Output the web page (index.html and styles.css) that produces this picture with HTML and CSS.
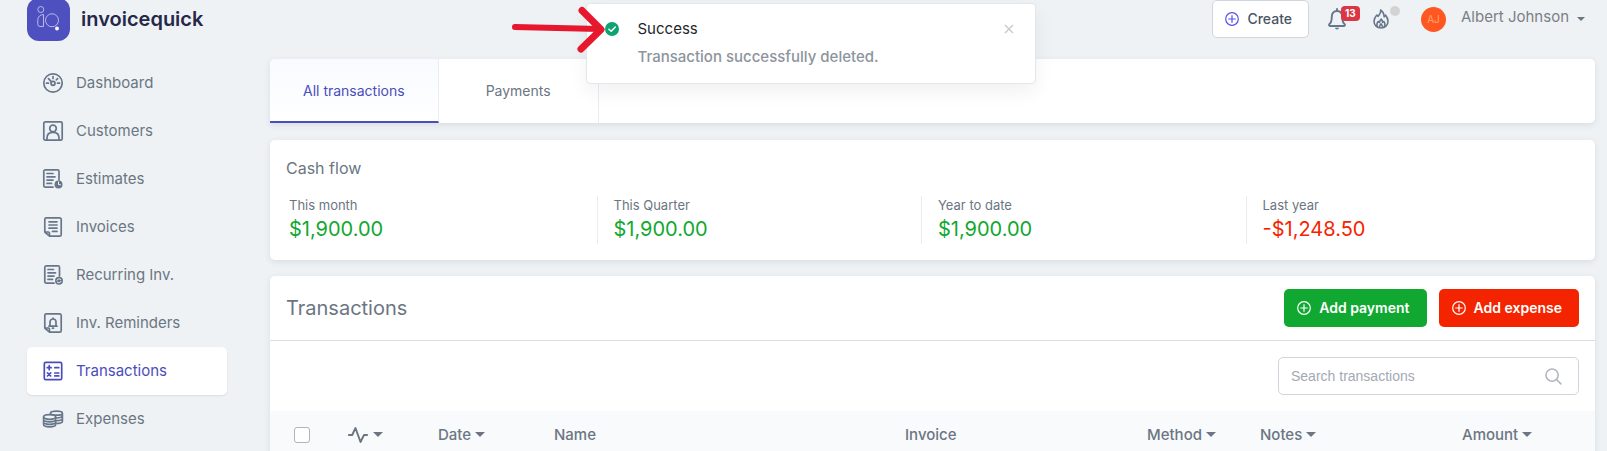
FILE: index.html
```html
<!DOCTYPE html>
<html lang="en">
<head>
<meta charset="utf-8">
<meta name="viewport" content="width=device-width, initial-scale=1">
<title>Transactions – invoicequick</title>
<link rel="stylesheet" href="styles.css">
</head>
<body>
<div class="app">
  <aside class="sidebar">
    <a class="brand" href="#">
      <svg class="brand-mark" viewBox="0 0 43 43" aria-hidden="true">
        <rect width="43" height="43" rx="12" fill="#4f50bf"/>
        <g fill="none" stroke="#b9b9ea" stroke-width="1">
          <circle cx="13.800" cy="11.500" r="3"/>
          <path d="M16.500 16.500v12h-3.500a2.200 2.200 0 0 1-2.200-2.200v-4.500c0-3 2.500-5.300 5.700-5.300z"/>
          <circle cx="25" cy="22.300" r="6.500"/>
        </g>
        <circle cx="30" cy="30.500" r="1.900" fill="#fff"/>
      </svg>
      <span class="brand-name">invoicequick</span>
    </a>
    <nav class="nav">
      <a class="nav-item" href="#">
        <svg class="nav-icon" viewBox="0 0 20 20" aria-hidden="true"><circle cx="10" cy="10" r="9.200"/><circle cx="10" cy="10.300" r="2"/><path d="M8.500 8.900 5.500 5.600M10 3.500v2M14.600 5.600l-1.300 1.300M3.500 10.200h2M14.500 10.200h2"/></svg>
        Dashboard</a>
      <a class="nav-item" href="#">
        <svg class="nav-icon" viewBox="0 0 20 20" aria-hidden="true"><rect x=".8" y=".8" width="18.400" height="18.400" rx="1.500"/><circle cx="10" cy="7.500" r="3.300"/><path d="M4 19v-2c0-3.400 2.400-5.600 6-5.600s6 2.200 6 5.600v2"/></svg>
        Customers</a>
      <a class="nav-item" href="#">
        <svg class="nav-icon" viewBox="0 0 20 20" aria-hidden="true"><path d="M16 11V2.300A1.500 1.500 0 0 0 14.500.8H2.300A1.500 1.500 0 0 0 .8 2.300v14.400a1.500 1.500 0 0 0 1.500 1.500H10M4 4.500h6M4 7.800h8M4 11.100h6M4 14.400h4.500"/><circle class="solid" cx="15.500" cy="15.500" r="4"/><path class="cut" d="M15.500 13v2.700h2"/></svg>
        Estimates</a>
      <a class="nav-item" href="#">
        <svg class="nav-icon" viewBox="0 0 20 20" aria-hidden="true"><path d="M3.300.8h13.400A1.500 1.500 0 0 1 18.200 2.300v15.400a1.500 1.500 0 0 1-1.500 1.500H6.500L1.800 15V2.300A1.500 1.500 0 0 1 3.300.8zM2 15h3.200a1.300 1.300 0 0 1 1.300 1.300V19M6 4.800h8M6 8h8M6 11.200h8M9.500 14.400H14"/></svg>
        Invoices</a>
      <a class="nav-item" href="#">
        <svg class="nav-icon" viewBox="0 0 20 20" aria-hidden="true"><path d="M16.500 11V2.300A1.500 1.500 0 0 0 15 .8H3.300a1.500 1.500 0 0 0-1.500 1.500v14.400a1.500 1.500 0 0 0 1.500 1.500H11M5 4.500h5.500M5 7.800h7.500M5 11.100h6M5 14.400h4.500"/><circle class="solid" cx="16" cy="15.800" r="4"/><path class="cut" d="M14 15.200a2.200 2.200 0 0 1 3.700-.8M18 16.400a2.200 2.200 0 0 1-3.700.8"/></svg>
        Recurring Inv.</a>
      <a class="nav-item" href="#">
        <svg class="nav-icon" viewBox="0 0 20 20" aria-hidden="true"><path d="M3.300.8h13.400A1.500 1.500 0 0 1 18.200 2.300v15.400a1.500 1.500 0 0 1-1.500 1.500H6.500L1.800 15V2.300A1.500 1.500 0 0 1 3.300.8zM2 15h3.200a1.300 1.300 0 0 1 1.300 1.300V19M6 13.200h8M7 13V9a3 3 0 0 1 6 0v4M10 5v1M9.500 15.200h1"/></svg>
        Inv. Reminders</a>
      <a class="nav-item is-active" href="#" aria-current="page">
        <svg class="nav-icon" viewBox="0 0 20 20" aria-hidden="true"><rect x="1.300" y="1.300" width="17.400" height="17.400" rx="1.500"/><path d="M4.200 6.700h4M6.200 4.700v4M11.800 6.700h4M4.500 11.800l3.200 3.200M7.700 11.800 4.500 15M11.800 12h4M11.800 14.900h4"/></svg>
        Transactions</a>
      <a class="nav-item" href="#">
        <svg class="nav-icon" viewBox="0 0 20 20" aria-hidden="true"><ellipse cx="6.600" cy="8" rx="6" ry="2.300"/><path d="M.6 8v7.500c0 1.300 2.700 2.300 6 2.300s6-1 6-2.300V8M.6 10.500c0 1.300 2.700 2.300 6 2.300s6-1 6-2.300M.6 13c0 1.300 2.700 2.300 6 2.300s6-1 6-2.300M7.500 5.500V4.200M7.500 4.200c0-1.200 2.700-2 6-2s5.900.8 5.900 2-2.600 2-5.900 2-6-.8-6-2M19.400 4.200v8c0 1.200-2.400 2.300-6.500 2.300M12.800 9c3.800 0 6.600-.9 6.600-2.200M12.800 11.800c3.800 0 6.600-.9 6.600-2.200"/></svg>
        Expenses</a>
    </nav>
  </aside>

  <main class="main">
    <header class="topbar">
      <button class="btn btn-create" type="button">
        <svg class="plus" viewBox="0 0 14 14" aria-hidden="true"><circle cx="7" cy="7" r="6.300"/><path d="M7 3.700v6.600M3.700 7h6.600"/></svg>
        Create
      </button>
      <button class="icon-btn bell" type="button" aria-label="Notifications">
        <svg class="bell-icon" viewBox="0 0 18 22" aria-hidden="true"><path d="M9 1v2M9 3C5.500 3 3.800 5.500 3.800 8.500c0 5-1 6.500-2.300 7.500-.8.700-.5 2 .5 2h14c1 0 1.300-1.300.5-2-1.300-1-2.300-2.500-2.300-7.500C14.200 5.500 12.500 3 9 3z"/><path class="clapper" d="M7 19.800h4a2 1.700 0 0 1-4 0z"/></svg>
        <span class="badge">13</span>
      </button>
      <button class="icon-btn flame" type="button" aria-label="What's new">
        <svg class="flame-icon" viewBox="0 0 16 20" aria-hidden="true"><path d="M7.600 1c.6 3-1.200 4.500-2.400 6.300L3.800 6C2.200 7.800 1 9.800 1 12.300 1 16.300 4 19 8 19s7-2.700 7-6.700c0-2.400-1-4.500-2.500-6.200l-1.300 1.800C11 5 9.800 2.500 7.600 1z"/><path d="M5 18.300c-1.800-2-1-4.300.2-5.800l1.300 1c.2-1.500.7-2.500 1.700-3.500 1 1 1.200 2 1.400 3.400l1.300-.9c1 1.500 1.600 4-.2 5.800M6.800 18c-.5-1.300.2-2.300 1.200-3.200 1 .9 1.700 1.900 1.200 3.200"/></svg>
        <span class="dot"></span>
      </button>
      <button class="user" type="button">
        <span class="avatar">AJ</span>
        <span class="user-name">Albert Johnson</span>
        <span class="caret caret-sm"></span>
      </button>
    </header>

    <nav class="card tabs" aria-label="Transaction views">
      <a class="tab is-active" href="#" aria-current="true">All transactions</a>
      <a class="tab" href="#">Payments</a>
    </nav>

    <section class="card cashflow">
      <h2 class="cashflow-title">Cash flow</h2>
      <dl class="stats">
        <div class="stat"><dt>This month</dt><dd class="gain">$1,900.00</dd></div>
        <div class="stat"><dt>This Quarter</dt><dd class="gain">$1,900.00</dd></div>
        <div class="stat"><dt>Year to date</dt><dd class="gain">$1,900.00</dd></div>
        <div class="stat"><dt>Last year</dt><dd class="loss">-$1,248.50</dd></div>
      </dl>
    </section>

    <section class="card listing">
      <div class="listing-head">
        <h1 class="listing-title">Transactions</h1>
        <div class="actions">
          <button class="btn btn-payment" type="button">
            <svg class="plus" viewBox="0 0 14 14" aria-hidden="true"><circle cx="7" cy="7" r="6.300"/><path d="M7 3.700v6.600M3.700 7h6.600"/></svg>
            Add payment
          </button>
          <button class="btn btn-expense" type="button">
            <svg class="plus" viewBox="0 0 14 14" aria-hidden="true"><circle cx="7" cy="7" r="6.300"/><path d="M7 3.700v6.600M3.700 7h6.600"/></svg>
            Add expense
          </button>
        </div>
      </div>
      <div class="toolbar">
        <label class="search">
          <input class="search-input" type="search" placeholder="Search transactions" aria-label="Search transactions">
          <svg class="search-icon" viewBox="0 0 18 18" aria-hidden="true"><circle cx="7.500" cy="7.500" r="6.500"/><path d="M12.200 12.200l4.600 4.600"/></svg>
        </label>
      </div>
      <table class="table">
        <colgroup>
          <col class="col-check"><col class="col-status"><col class="col-date"><col><col class="col-invoice"><col class="col-method"><col class="col-notes"><col class="col-amount">
        </colgroup>
        <thead>
          <tr>
            <th class="cell-check"><input class="check" type="checkbox" aria-label="Select all transactions"></th>
            <th><button class="sort" type="button" aria-label="Status"><svg class="pulse" viewBox="0 0 20 18" aria-hidden="true"><path d="M.8 9h3.400L7.500 2l5 14L16 9h3.200"/></svg><span class="caret"></span></button></th>
            <th><button class="sort" type="button">Date<span class="caret"></span></button></th>
            <th>Name</th>
            <th>Invoice</th>
            <th><button class="sort" type="button">Method<span class="caret"></span></button></th>
            <th><button class="sort" type="button">Notes<span class="caret"></span></button></th>
            <th><button class="sort" type="button">Amount<span class="caret"></span></button></th>
          </tr>
        </thead>
      </table>
    </section>
  </main>

  <div class="toast" role="status">
    <svg class="toast-icon" viewBox="0 0 14 14" aria-hidden="true"><circle cx="7" cy="7" r="7" fill="#0ea371"/><path d="M3.900 7.200 6.200 9.300l4.100-4.300" fill="none" stroke="#fff" stroke-width="1.500" stroke-linecap="round" stroke-linejoin="round"/></svg>
    <div class="toast-body">
      <p class="toast-title">Success</p>
      <p class="toast-text">Transaction successfully deleted.</p>
    </div>
    <button class="toast-close" type="button" aria-label="Close">
      <svg viewBox="0 0 10 10" aria-hidden="true"><path d="M1 1l8 8M9 1 1 9"/></svg>
    </button>
    <svg class="pointer" viewBox="0 0 94 46" aria-hidden="true"><path d="M4 21 88 23"/><path class="pointer-head" d="M71 4.500l19 19-20 19.500"/></svg>
  </div>
</div>
</body>
</html>
```
FILE: styles.css
```css
* {
  box-sizing: border-box;
}

body {
  margin: 0;
  background: #eef2f5;
  color: #6b7682;
  font-family: Inter, "Liberation Sans", sans-serif;
  font-size: 15px;
  line-height: 20px;
}

h1, h2, p, dl, dd {
  margin: 0;
  font-weight: 400;
}

a {
  color: inherit;
  text-decoration: none;
}

button {
  border: 0;
  padding: 0;
  background: none;
  color: inherit;
  font: inherit;
  cursor: pointer;
}

.app {
  position: relative;
  display: flex;
  height: 100vh;
  overflow: hidden;
}

/* Sidebar */
.sidebar {
  flex: none;
  width: 270px;
  padding: 0 43px 0 27px;
}

.brand {
  display: flex;
  align-items: center;
  gap: 11px;
  margin: -2px 0 18px;
}

.brand-mark {
  width: 43px;
  height: 43px;
}

.brand-name {
  padding-bottom: 2px;
  color: #252849;
  font-size: 20px;
  font-weight: 600;
}

.nav-item {
  display: flex;
  align-items: center;
  gap: 13px;
  height: 48px;
  padding: 0 16px;
  border-radius: 5px;
}

.nav-item.is-active {
  background: #fff;
  color: #4b4dbd;
  box-shadow: 0 1px 2px rgba(40, 50, 70, 0.1);
}

.nav-icon {
  flex: none;
  width: 20px;
  height: 20px;
  overflow: visible;
  fill: none;
  stroke: #68768a;
  stroke-width: 1.7;
  stroke-linecap: round;
  stroke-linejoin: round;
}

.is-active .nav-icon {
  stroke: #4b4dbd;
}

.nav-icon .solid {
  fill: #68768a;
  stroke: none;
}

.nav-icon .cut {
  stroke: #eef2f5;
  stroke-width: 1;
}

/* Main column */
.main {
  flex: 1;
  min-width: 0;
  padding-right: 12px;
}

.topbar {
  display: flex;
  align-items: center;
  justify-content: flex-end;
  height: 38px;
  margin-bottom: 21px;
  padding-right: 10px;
}

.btn {
  display: flex;
  align-items: center;
  gap: 8px;
  height: 38px;
  padding: 0 16px 0 12px;
  border: 1px solid transparent;
  border-radius: 5px;
  font-size: 14px;
  font-weight: 600;
  color: #fff;
}

.plus {
  width: 14px;
  height: 14px;
  fill: none;
  stroke: currentColor;
  stroke-width: 1.2;
  stroke-linecap: round;
}

.btn-create {
  margin-right: 19px;
  border-color: #d1d5dd;
  background: #fff;
  color: #4b5563;
  font-weight: 500;
}

.btn-create .plus {
  stroke: #5850ec;
}

.btn-payment {
  background: #10a830;
}

.btn-expense {
  background: #f52400;
}

.icon-btn {
  position: relative;
  display: flex;
}

.bell {
  margin-right: 27px;
}

.bell-icon {
  width: 18px;
  height: 22px;
  fill: none;
  stroke: #68768a;
  stroke-width: 1.9;
  stroke-linecap: round;
}

.bell-icon .clapper {
  fill: #68768a;
  stroke: none;
}

.badge {
  position: absolute;
  top: -2px;
  left: 13px;
  padding: 0 4px;
  border-radius: 4px;
  background: #dc3545;
  color: #fff;
  font-size: 10px;
  font-weight: 700;
  line-height: 15px;
}

.flame {
  margin-right: 32px;
}

.flame-icon {
  width: 16px;
  height: 20px;
  fill: none;
  stroke: #68768a;
  stroke-width: 1.6;
  stroke-linejoin: round;
}

.dot {
  position: absolute;
  top: -3px;
  left: 17px;
  width: 10px;
  height: 10px;
  border-radius: 50%;
  background: #d3d3d3;
}

.user {
  display: flex;
  align-items: center;
}

.avatar {
  width: 25px;
  margin-right: 15px;
  border-radius: 50%;
  background: #ff5722;
  color: #ffa56b;
  font-size: 10px;
  line-height: 25px;
}

.user-name {
  margin-right: 8px;
  padding-bottom: 4px;
  color: #7b7f85;
}

.caret {
  border: 5px solid transparent;
  border-top-color: currentColor;
  border-bottom: 0;
}

.caret-sm {
  border-width: 4px 4px 0;
}

.card {
  border-radius: 5px;
  background: #fff;
  box-shadow: 0 2px 6px rgba(40, 50, 70, 0.1);
}

.tabs {
  display: flex;
  height: 64px;
  margin-bottom: 17px;
  border-bottom-left-radius: 0;
  font-size: 14px;
}

.tab {
  display: flex;
  align-items: center;
  justify-content: center;
  min-width: 160px;
  padding: 0 33px;
  border-right: 1px solid #e9ecf0;
}

.tab.is-active {
  padding-top: 2px;
  border-bottom: 2px solid #4b4dbd;
  border-top-left-radius: 5px;
  background: linear-gradient(#f8faff, #fff);
  color: #4b4dbd;
}

.cashflow {
  margin-bottom: 16px;
  padding: 16px 24px 16px 3px;
}

.cashflow-title {
  padding: 2px 13px 18px;
  font-size: 16px;
}

.stats {
  display: grid;
  grid-template-columns: repeat(4, 1fr);
}

.stat {
  height: 48px;
  padding-left: 16px;
  border-right: 1px solid #e9ecf0;
}

.stat:last-child {
  border-right: 0;
}

.stat dt {
  font-size: 13px;
  line-height: 18px;
}

.stat dd {
  font-size: 20px;
  line-height: 30px;
}

.gain {
  color: #10a830;
}

.loss {
  color: #f52400;
}

.listing-head {
  display: flex;
  align-items: center;
  justify-content: space-between;
  height: 65px;
  padding: 0 16px;
  border-bottom: 1px solid #dcdde0;
}

.listing-title {
  font-size: 20px;
}

.actions {
  display: flex;
  gap: 12px;
}

.toolbar {
  display: flex;
  justify-content: flex-end;
  padding: 16px;
}

.search {
  display: flex;
  align-items: center;
  width: 301px;
  height: 38px;
  padding: 0 16px 0 12px;
  border: 1px solid #d2d4dd;
  border-radius: 5px;
}

.search-input {
  flex: 1;
  min-width: 0;
  padding: 0;
  border: 0;
  outline: 0;
  background: none;
  color: inherit;
  font-family: "Liberation Sans", Arial, sans-serif;
  font-size: 14px;
}

.search-input::placeholder {
  color: #a3a9b4;
}

.search-icon {
  width: 17px;
  height: 17px;
  fill: none;
  stroke: #b3b7bf;
  stroke-width: 1.7;
  stroke-linecap: round;
}

.table {
  width: 100%;
  table-layout: fixed;
  border-collapse: collapse;
  background: #f9fafc;
}

.col-check { width: 62px; }
.col-status { width: 90px; }
.col-date { width: 116px; }
.col-invoice { width: 242px; }
.col-method { width: 113px; }
.col-notes { width: 202px; }
.col-amount { width: 149px; }

.table th {
  height: 47px;
  padding: 0 0 0 16px;
  font-weight: 500;
  text-align: left;
}

.table .cell-check {
  padding-left: 24px;
}

.check {
  display: block;
  appearance: none;
  width: 16px;
  height: 16px;
  margin: 0;
  border: 1px solid #adb5bd;
  border-radius: 3px;
  background: #fff;
}

.sort {
  display: flex;
  align-items: center;
  gap: 4px;
}

.pulse {
  width: 20px;
  height: 18px;
  margin-right: 1px;
  fill: none;
  stroke: currentColor;
  stroke-width: 1.9;
  stroke-linecap: round;
  stroke-linejoin: round;
}

/* Floating notification */
.toast {
  position: absolute;
  top: 3px;
  left: calc(50% - 218px);
  display: flex;
  width: 450px;
  padding: 15px 21px 16px 20px;
  border: 1px solid #e3e6ea;
  border-radius: 4px;
  background: #fff;
  box-shadow: 0 8px 20px rgba(0, 0, 0, 0.06);
}

.toast-icon {
  width: 14px;
  height: 14px;
  margin: 3px 19px 0 -2px;
}

.toast-body {
  flex: 1;
}

.toast-title {
  margin-bottom: 8px;
  color: #24272b;
}

.toast-text {
  color: #8c949d;
  font-weight: 500;
}

.toast-close {
  width: 10px;
  height: 20px;
}

.toast-close svg {
  width: 10px;
  height: 10px;
  fill: none;
  stroke: #c9ced5;
  stroke-width: 1.6;
}

.pointer {
  position: absolute;
  top: 2px;
  left: -76px;
  width: 94px;
  height: 46px;
  overflow: visible;
  fill: none;
  stroke: #e7182e;
  stroke-width: 6;
  stroke-linecap: round;
  stroke-linejoin: round;
}

.pointer-head {
  stroke-width: 7;
}
```
